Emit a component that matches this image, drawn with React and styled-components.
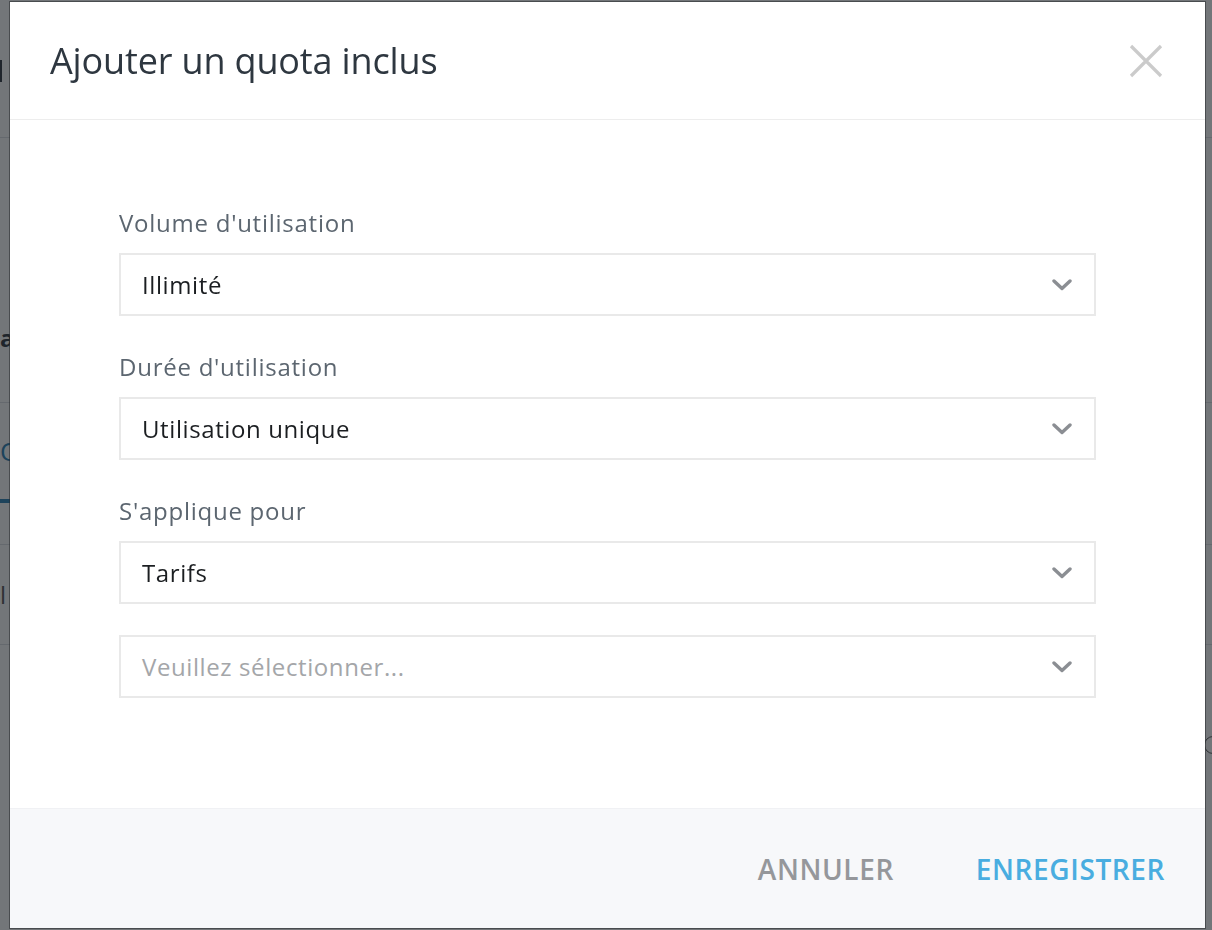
import React from "react";
import styled, { createGlobalStyle } from "styled-components";

const GlobalStyle = createGlobalStyle`
  html, body { margin: 0; padding: 0; }
  body {
    font-family: "Open Sans", "Noto Sans", "Liberation Sans", sans-serif;
    background: #ffffff;
    overflow: hidden;
  }
  * { box-sizing: border-box; }
`;

/* ---------- background page (behind the overlay) ---------- */
const Page = styled.div`
  width: 1212px;
  height: 930px;
  background: #ffffff;
  display: flex;
  flex-direction: column;
`;

const PageTop = styled.div`
  height: 138px;
  flex: none;
  border-bottom: 1px solid #dcdfe3;
`;

const PageSection = styled.div`
  height: ${(p) => p.$h}px;
  flex: none;
  border-bottom: ${(p) => (p.$noLine ? "0" : "1px solid #dcdfe3")};
  display: flex;
  align-items: ${(p) => p.$align || "center"};
  justify-content: ${(p) => p.$justify || "flex-start"};
  padding-bottom: ${(p) => p.$pb || 0}px;
  font-size: 24px;
  font-weight: ${(p) => (p.$bold ? 700 : 400)};
  color: ${(p) => p.$color || "#2d3640"};
`;

const PageMarker = styled.div`
  width: 2px;
  height: 22px;
  margin-top: 60px;
  background: #2d3640;
`;

const PageTab = styled.div`
  height: 100%;
  display: flex;
  align-items: center;
  color: #2a7fb5;
  border-bottom: 4px solid #2a7fb5;
  padding-right: 2px;
  font-size: 26px;
`;

const PageRadio = styled.span`
  width: 18px;
  height: 18px;
  margin-right: -10px;
  border-radius: 50%;
  border: 1px solid #555;
`;

/* ---------- overlay + modal ---------- */
const Overlay = styled.div`
  position: fixed;
  inset: 0;
  background: rgba(22, 26, 31, 0.6);
  display: flex;
  justify-content: center;
  align-items: flex-start;
  padding-top: 2px;
`;

const Modal = styled.div`
  width: 1195px;
  height: 926px;
  margin-left: 3px;
  background: #ffffff;
  display: flex;
  flex-direction: column;
  box-shadow: 0 0 0 1px rgba(40, 42, 46, 0.55);
`;

const Header = styled.div`
  height: 118px;
  flex: none;
  padding: 0 42px 0 40px;
  display: flex;
  align-items: center;
  justify-content: space-between;
  border-bottom: 1px solid #ededed;
`;

const Title = styled.h2`
  margin: 0;
  font-size: 36px;
  font-weight: 400;
  color: #2e3740;
  letter-spacing: -0.15px;
`;

const CloseButton = styled.button`
  border: 0;
  background: none;
  padding: 0;
  width: 34px;
  height: 34px;
  cursor: pointer;
  display: flex;
  align-items: center;
  justify-content: center;
`;

const Body = styled.div`
  flex: 1;
  padding: 88px 109px 0 109px;
  display: flex;
  flex-direction: column;
`;

const Field = styled.div`
  display: flex;
  flex-direction: column;
  flex: none;
  margin-bottom: 36px;
`;

const Label = styled.label`
  font-size: 24px;
  line-height: 30px;
  letter-spacing: 0.75px;
  color: #5c6670;
  margin-bottom: 15px;
`;

const Select = styled.div`
  height: 63px;
  flex: none;
  border: 2px solid #e9e9e9;
  background: #ffffff;
  display: flex;
  align-items: center;
  justify-content: space-between;
  padding: 0 22px 0 21px;
  font-size: 24px;
  letter-spacing: 0.6px;
  color: ${(p) => (p.$placeholder ? "#a4a6a9" : "#1b1e21")};
  & + & {
    margin-top: 31px;
  }
`;

const Footer = styled.div`
  height: 120px;
  flex: none;
  background: #f7f8fa;
  border-top: 1px solid #f0f1f4;
  display: flex;
  align-items: center;
  justify-content: flex-end;
  gap: 82px;
  padding: 0 40px 0 0;
`;

const FooterButton = styled.button`
  border: 0;
  background: none;
  padding: 0;
  font-family: inherit;
  font-size: 28px;
  font-weight: 600;
  letter-spacing: 0.6px;
  color: ${(p) => (p.$primary ? "#49ade0" : "#95979b")};
  cursor: pointer;
`;

const Chevron = () => (
  <svg width="20" height="12" viewBox="0 0 20 12" fill="none">
    <polyline
      points="2,2 10,9.5 18,2"
      stroke="#8b8e93"
      strokeWidth="3.4"
      strokeLinecap="round"
      strokeLinejoin="round"
    />
  </svg>
);

const CloseIcon = () => (
  <svg width="34" height="34" viewBox="0 0 34 34" fill="none">
    <path d="M2 2 L32 32 M32 2 L2 32" stroke="#cbcbcb" strokeWidth="3.2" />
  </svg>
);

const SelectBox = ({ value, placeholder }) => (
  <Select $placeholder={!value}>
    <span>{value || placeholder}</span>
    <Chevron />
  </Select>
);

export default function App() {
  return (
    <>
      <GlobalStyle />
      <Page>
        <PageTop>
          <PageMarker />
        </PageTop>
        <PageSection $h={265} $bold $align="flex-end" $pb={48}>
          at
        </PageSection>
        <PageSection $h={100} $noLine>
          <PageTab>O</PageTab>
        </PageSection>
        <PageSection $h={42} />
        <PageSection $h={100} $color="#555">
          l
        </PageSection>
        <PageSection $h={200} $noLine $justify="flex-end">
          <PageRadio />
        </PageSection>
      </Page>
      <Overlay>
        <Modal>
          <Header>
            <Title>Ajouter un quota inclus</Title>
            <CloseButton aria-label="Fermer">
              <CloseIcon />
            </CloseButton>
          </Header>
          <Body>
            <Field>
              <Label>Volume d'utilisation</Label>
              <SelectBox value="Illimité" />
            </Field>
            <Field>
              <Label>Durée d'utilisation</Label>
              <SelectBox value="Utilisation unique" />
            </Field>
            <Field>
              <Label>S'applique pour</Label>
              <SelectBox value="Tarifs" />
              <SelectBox placeholder="Veuillez sélectionner..." />
            </Field>
          </Body>
          <Footer>
            <FooterButton>ANNULER</FooterButton>
            <FooterButton $primary>ENREGISTRER</FooterButton>
          </Footer>
        </Modal>
      </Overlay>
    </>
  );
}
